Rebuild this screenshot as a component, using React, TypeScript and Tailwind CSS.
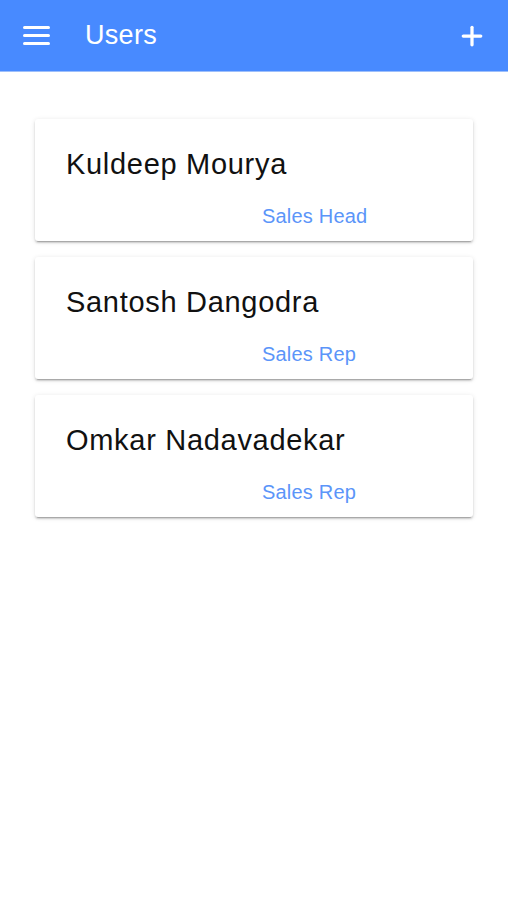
import { Plus } from "lucide-react";

const users = [
  { name: "Kuldeep Mourya", role: "Sales Head" },
  { name: "Santosh Dangodra", role: "Sales Rep" },
  { name: "Omkar Nadavadekar", role: "Sales Rep" },
];

export default function App() {
  return (
    <div className="min-h-[900px] bg-white font-['Liberation_Sans',Arial,sans-serif]">
      <div className="h-[72px] bg-[#488aff] flex items-center px-[23px] border-b border-[#9dbffb]">
        <button className="w-[27px] flex flex-col gap-[5px]">
          <span className="block h-[3px] bg-white rounded-full" />
          <span className="block h-[3px] bg-white rounded-full" />
          <span className="block h-[3px] bg-white rounded-full" />
        </button>
        <h1 className="ml-[35px] text-[27px] tracking-[0.3px] text-white">Users</h1>
        <button className="ml-auto -mr-[2px]">
          <Plus size={30} strokeWidth={2.6} className="text-white" />
        </button>
      </div>

      <div className="px-[35px] pt-[47px] flex flex-col gap-[16px]">
        {users.map((u) => (
          <div
            key={u.name}
            className="bg-white rounded-[3px] pl-[31px] pt-[28px] pb-[13px] shadow-[0_2px_2px_rgba(0,0,0,0.14),0_3px_1px_-2px_rgba(0,0,0,0.2),0_1px_5px_rgba(0,0,0,0.12)]"
          >
            <p className="text-[29px] leading-[34px] tracking-[0.7px] text-[#111]">{u.name}</p>
            <p className="mt-[23px] pl-[196px] text-[20px] leading-[24px] tracking-[0.2px] text-[#5b95f9]">{u.role}</p>
          </div>
        ))}
      </div>
    </div>
  );
}
